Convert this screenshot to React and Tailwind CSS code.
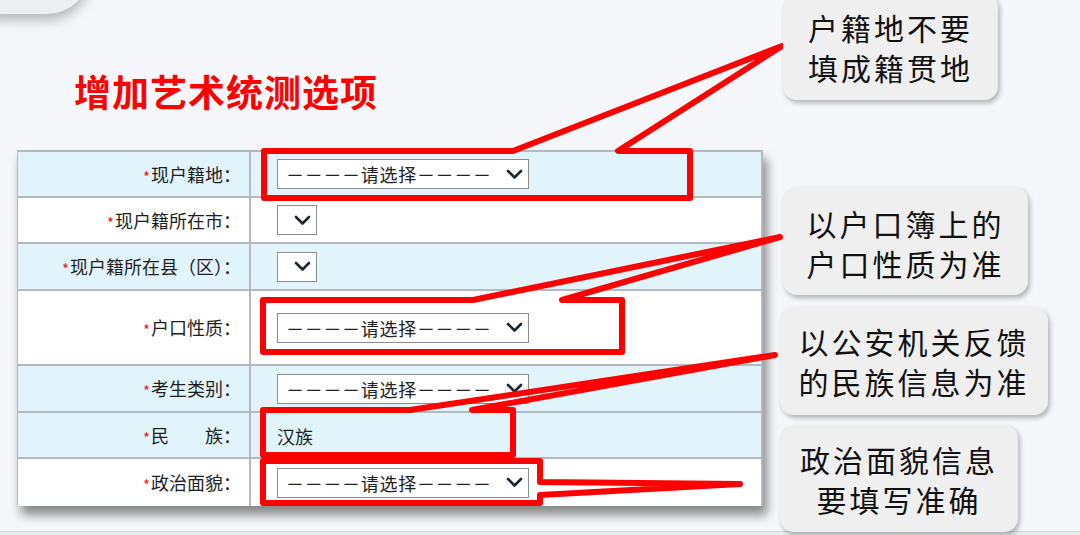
import React from "react";

const Chevron = () => (
  <svg width="17" height="11" viewBox="0 0 17 11" className="shrink-0">
    <path d="M2 2 L8.5 8.5 L15 2" fill="none" stroke="#1b2733" strokeWidth="2.6" strokeLinecap="round" strokeLinejoin="round" />
  </svg>
);

const Select = () => (
  <div className="w-[252px] h-[30px] border border-[#8c8c8c] bg-white flex items-center pl-[8px] pr-[5px] text-[18px] leading-none text-[#222]">
    <span className="tracking-[0.7px]">－－－－请选择－－－－</span>
    <span className="ml-auto"><Chevron /></span>
  </div>
);

const SmallSelect = () => (
  <div className="w-[40px] h-[30px] border border-[#8c8c8c] bg-white flex items-center justify-end pr-[5px]">
    <Chevron />
  </div>
);

const Label = ({ children }) => (
  <div className="w-[233px] shrink-0 flex items-center justify-end pr-[8px] border-r-2 border-[#b3babf] text-[18px] text-[#1e1e1e]">
    <span className="text-[#e8201c] text-[15px] leading-none mr-[1px] relative top-[2px]">*</span>
    <span>{children}</span>
  </div>
);

const Row = ({ h, blue, label, children, last }) => (
  <div className={`flex ${h} ${blue ? "bg-[#e1f4fc]" : "bg-white"} ${last ? "" : "border-b-2 border-[#b3babf]"}`}>
    <Label>{label}</Label>
    <div className="flex-1 flex items-center pl-[26px] text-[18px] text-[#1e1e1e]">{children}</div>
  </div>
);

const Bubble = ({ className, lines }) => (
  <div className={`absolute rounded-[14px] bg-[#efefef] shadow-[2px_3px_5px_rgba(0,0,0,0.28)] flex flex-col items-center justify-center text-[30px] leading-[40px] tracking-[3px] text-[#111] font-['Noto_Sans_CJK_SC',sans-serif] ${className}`}>
    {lines.map((l) => (
      <div key={l}>{l}</div>
    ))}
  </div>
);

export default function App() {
  return (
    <div className="relative w-[1080px] h-[535px] overflow-hidden bg-[#f5f7fa] font-['Noto_Sans_CJK_SC',sans-serif]">
      {/* top-left blob */}
      <div className="absolute left-[-40px] top-[-72px] w-[130px] h-[86px] rounded-full bg-[#eceef1] shadow-[0_5px_14px_rgba(0,0,0,0.3)]" />

      <div className="pt-[73px] pl-[17px]">
        <div className="ml-[57px] text-[37px] leading-none font-bold text-[#ff0000] tracking-[1px]">增加艺术统测选项</div>

        <div className="mt-[40px] w-[746px] border-t-2 border-r-2 border-l border-[#b3babf] bg-white shadow-[4px_9px_10px_rgba(0,0,0,0.45)]">
          <Row h="h-[46px]" blue label="现户籍地：">
            <Select />
          </Row>
          <Row h="h-[46px]" label="现户籍所在市：">
            <SmallSelect />
          </Row>
          <Row h="h-[47px]" blue label="现户籍所在县（区）：">
            <SmallSelect />
          </Row>
          <Row h="h-[75px]" label="户口性质：">
            <Select />
          </Row>
          <Row h="h-[47px]" blue label="考生类别：">
            <Select />
          </Row>
          <Row h="h-[46px]" blue label="民　　族：">
            <span className="relative top-[1px]">汉族</span>
          </Row>
          <Row h="h-[47px]" last label="政治面貌：">
            <Select />
          </Row>
        </div>
      </div>

      {/* bottom strip */}
      <div className="absolute left-0 right-0 bottom-0 h-[4px] bg-[#e9ebee] border-t border-[#d4d6d9]" />

      {/* red annotation marks */}
      <svg className="absolute inset-0 pointer-events-none" width="1080" height="535" viewBox="0 0 1080 535">
        <g fill="none" stroke="#ff0000" strokeWidth="6" strokeLinejoin="round" strokeLinecap="round">
          <path d="M264,151 L513,151 L782,46 L618,151 L690,151 L690,198 L264,198 Z" />
          <path d="M263,300 L473,300 L780,237 L562,300 L622,300 L622,352 L263,352 Z" />
          <path d="M263,410 L410,410 L775,355 L472,410 L513,410 L513,455 L263,455 Z" />
          <path d="M263,461 L540,461 L540,482 L740,484 L540,495 L540,503 L263,503 Z" />
        </g>
      </svg>

      <Bubble className="left-[783px] top-[-6px] w-[215px] h-[106px]" lines={["户籍地不要", "填成籍贯地"]} />
      <Bubble className="left-[783px] top-[187px] w-[245px] h-[108px] pt-[3px]" lines={["以户口簿上的", "户口性质为准"]} />
      <Bubble className="left-[780px] top-[307px] w-[268px] h-[108px]" lines={["以公安机关反馈", "的民族信息为准"]} />
      <Bubble className="left-[780px] top-[425px] w-[238px] h-[107px]" lines={["政治面貌信息", "要填写准确"]} />
    </div>
  );
}
